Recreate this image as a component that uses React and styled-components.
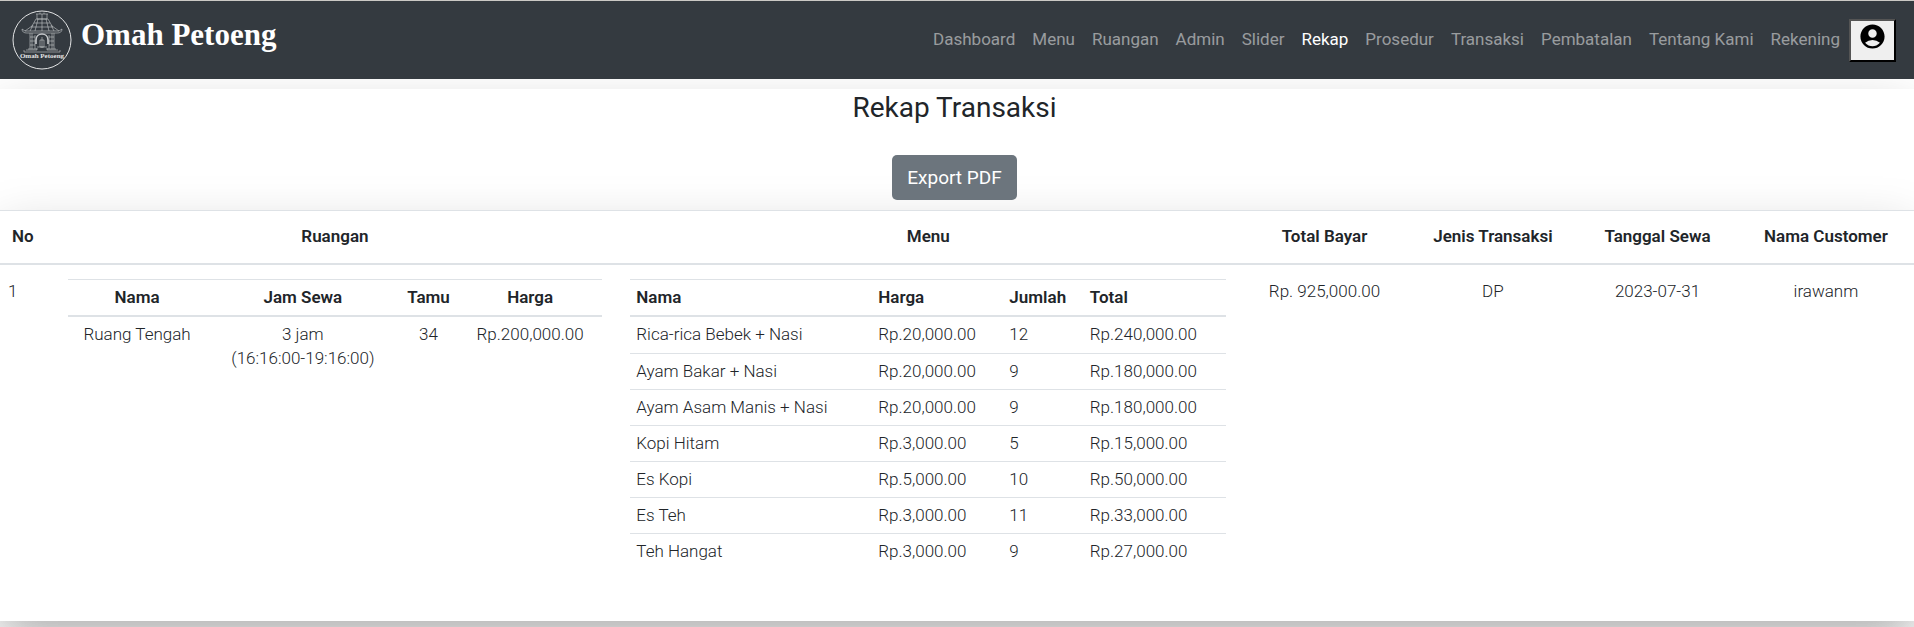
import React from "react";
import styled, { createGlobalStyle, css } from "styled-components";
import { MdAccountCircle } from "react-icons/md";

const GlobalStyle = createGlobalStyle`
  *, *::before, *::after { box-sizing: border-box; }
  body {
    margin: 0;
    background: #fff;
    color: #212529;
    font-family: Roboto, "Liberation Sans", sans-serif;
    font-size: 17px;
    font-weight: 300;
    line-height: 24px;
  }
`;

const largeShadow = css`
  box-shadow: 0 16px 48px rgba(0, 0, 0, 0.175);
`;

const Page = styled.div`
  min-height: 100vh;
`;

const Navbar = styled.header`
  position: relative;
  z-index: 1;
  display: flex;
  align-items: center;
  justify-content: space-between;
  padding: 9px 18px 9px 12px;
  border-top: 1px solid #cbc9c5;
  background: #343a40;
`;

const Brand = styled.a`
  display: flex;
  align-items: center;
  gap: 9px;
  color: #fff;
  text-decoration: none;
`;

const BrandName = styled.span`
  padding-bottom: 10px;
  font-family: "Liberation Serif", serif;
  font-size: 31px;
  font-weight: 700;
  line-height: 40px;
  white-space: nowrap;
`;

const Nav = styled.nav`
  display: flex;
  align-items: center;
  gap: 9px;
`;

const NavList = styled.div`
  display: flex;
  gap: 17px;
`;

const NavLink = styled.a`
  padding: 7px 0 9px;
  color: ${(p) => (p.$active ? "#fff" : "rgba(255, 255, 255, 0.5)")};
  font-weight: 400;
  text-decoration: none;
  white-space: nowrap;
`;

const AccountButton = styled.button`
  display: flex;
  justify-content: center;
  width: 47px;
  height: 43px;
  padding: 1px 0 0;
  border: 2px outset #000;
  background: #efefef;
  color: #000;
`;

const Card = styled.main`
  margin-top: 10px;
  background: #fff;
  ${largeShadow}
`;

const CardHead = styled.div`
  display: flex;
  flex-direction: column;
  align-items: center;
  gap: 30px;
  padding: 2px 5px 10px 0;
`;

const Title = styled.h1`
  margin: 0;
  font-size: 28px;
  font-weight: 400;
  line-height: 34px;
`;

const ExportButton = styled.button`
  height: 45px;
  padding: 0 15px;
  border: 0;
  border-radius: 5px;
  background: #6c757d;
  color: #fff;
  font-family: inherit;
  font-size: 19px;
  font-weight: 400;
`;

const Table = styled.table`
  width: 100%;
  table-layout: fixed;
  border-spacing: 0;
  background: #fff;
`;

const RecapTable = styled(Table)`
  ${largeShadow}
`;

const Col = styled.col`
  width: ${(p) => p.$width}%;
`;

const HeadCell = styled.th`
  padding: 13px 14px 15px;
  border-top: 1px solid #dee2e6;
  border-bottom: 2px solid #dee2e6;
  font-weight: 600;
  text-align: center;
  white-space: nowrap;
`;

const NumberHead = styled(HeadCell)`
  padding-left: 12px;
  text-align: left;
`;

const Cell = styled.td`
  padding: 14px 14px 52px;
  text-align: center;
  vertical-align: top;
`;

const NumberCell = styled(Cell)`
  padding-left: 8px;
  text-align: left;
`;

const InnerHead = styled.th`
  padding: 5px 6px 6px;
  border-top: 1px solid #dee2e6;
  border-bottom: 2px solid #dee2e6;
  font-weight: 600;
  text-align: ${(p) => p.$align};
`;

const InnerCell = styled.td`
  padding: 5px 6px 7px;
  text-align: ${(p) => p.$align};
  vertical-align: top;
  white-space: pre-line;

  tr + tr > & {
    padding-bottom: 6px;
    border-top: 1px solid #dee2e6;
  }
`;

function Logo() {
  return (
    <svg width="60" height="60" viewBox="0 0 60 60" fill="none" stroke="#c6c9cb" aria-hidden="true">
      <circle cx="30" cy="30" r="29" stroke="#e3e4e5" />
      <g strokeWidth="0.6">
        <path d="M24 4h12M25 4v5h10V4M28 4V2.500M32 4V2.500M30 4v5" />
        <path d="M24 9h12l4 7 7 5h-34l7-5z" />
        <path d="M22 13h16M19 17h22M26 9l-3 12M30 9v12M34 9l3 12M21 15l-3 6M39 15l3 6" />
        <path d="M13 21l-3-2c0 3 2 4 5 4h30c3 0 5-1 5-4l-3 2" />
        <path d="M18 23v16M20 23v16M23 25v14M37 25v14M40 23v16M42 23v16M18 27h5M18 31h5M18 35h5M37 27h5M37 31h5M37 35h5" />
        <path d="M28 37v-7h4v7zM30 27v11" />
        <path d="M16 39h9M35 39h9M14 40h11v-2M46 40h-11v-2M12 40v2h36v-2M25 37h10" />
      </g>
      <path d="M24 34v-4c0-8 12-8 12 0v4" strokeWidth="1.600" />
      <text
        x="30"
        y="48"
        fill="#e3e4e5"
        stroke="none"
        textAnchor="middle"
        fontFamily="Liberation Serif, serif"
        fontSize="7"
        fontWeight="700"
      >
        Omah Petoeng
      </text>
    </svg>
  );
}

const links = [
  "Dashboard",
  "Menu",
  "Ruangan",
  "Admin",
  "Slider",
  "Rekap",
  "Prosedur",
  "Transaksi",
  "Pembatalan",
  "Tentang Kami",
  "Rekening",
];

const headings = ["Ruangan", "Menu", "Total Bayar", "Jenis Transaksi", "Tanggal Sewa", "Nama Customer"];

const rooms = [["Ruang Tengah", "3 jam\n(16:16:00-19:16:00)", "34", "Rp.200,000.00"]];

const menu = [
  ["Rica-rica Bebek + Nasi", "Rp.20,000.00", "12", "Rp.240,000.00"],
  ["Ayam Bakar + Nasi", "Rp.20,000.00", "9", "Rp.180,000.00"],
  ["Ayam Asam Manis + Nasi", "Rp.20,000.00", "9", "Rp.180,000.00"],
  ["Kopi Hitam", "Rp.3,000.00", "5", "Rp.15,000.00"],
  ["Es Kopi", "Rp.5,000.00", "10", "Rp.50,000.00"],
  ["Es Teh", "Rp.3,000.00", "11", "Rp.33,000.00"],
  ["Teh Hangat", "Rp.3,000.00", "9", "Rp.27,000.00"],
];

function Columns({ widths }) {
  return (
    <colgroup>
      {widths.map((w, i) => (
        <Col key={i} $width={w} />
      ))}
    </colgroup>
  );
}

function InnerTable({ widths, heads, rows, align }) {
  return (
    <Table>
      <Columns widths={widths} />
      <thead>
        <tr>
          {heads.map((h) => (
            <InnerHead key={h} scope="col" $align={align}>{h}</InnerHead>
          ))}
        </tr>
      </thead>
      <tbody>
        {rows.map((row) => (
          <tr key={row[0]}>
            {row.map((value, i) => (
              <InnerCell key={i} $align={align}>{value}</InnerCell>
            ))}
          </tr>
        ))}
      </tbody>
    </Table>
  );
}

export default function App() {
  return (
    <Page>
      <GlobalStyle />
      <Navbar>
        <Brand href="#">
          <Logo />
          <BrandName>Omah Petoeng</BrandName>
        </Brand>
        <Nav>
          <NavList>
            {links.map((label) => (
              <NavLink key={label} href="#" $active={label === "Rekap"}>{label}</NavLink>
            ))}
          </NavList>
          <AccountButton type="button" aria-label="Account">
            <MdAccountCircle size={29} />
          </AccountButton>
        </Nav>
      </Navbar>
      <Card>
        <CardHead>
          <Title>Rekap Transaksi</Title>
          <ExportButton type="button">Export PDF</ExportButton>
        </CardHead>
        <RecapTable>
          <Columns widths={[2.8, 29.4, 32.6, 8.8, 8.8, 8.4, 9.2]} />
          <thead>
            <tr>
              <NumberHead scope="col">No</NumberHead>
              {headings.map((h) => (
                <HeadCell key={h} scope="col">{h}</HeadCell>
              ))}
            </tr>
          </thead>
          <tbody>
            <tr>
              <NumberCell>1</NumberCell>
              <Cell>
                <InnerTable
                  widths={[26, 36, 11, 27]}
                  heads={["Nama", "Jam Sewa", "Tamu", "Harga"]}
                  rows={rooms}
                  align="center"
                />
              </Cell>
              <Cell>
                <InnerTable
                  widths={[40.6, 22, 13.5, 23.9]}
                  heads={["Nama", "Harga", "Jumlah", "Total"]}
                  rows={menu}
                  align="left"
                />
              </Cell>
              <Cell>Rp. 925,000.00</Cell>
              <Cell>DP</Cell>
              <Cell>2023-07-31</Cell>
              <Cell>irawanm</Cell>
            </tr>
          </tbody>
        </RecapTable>
      </Card>
    </Page>
  );
}
